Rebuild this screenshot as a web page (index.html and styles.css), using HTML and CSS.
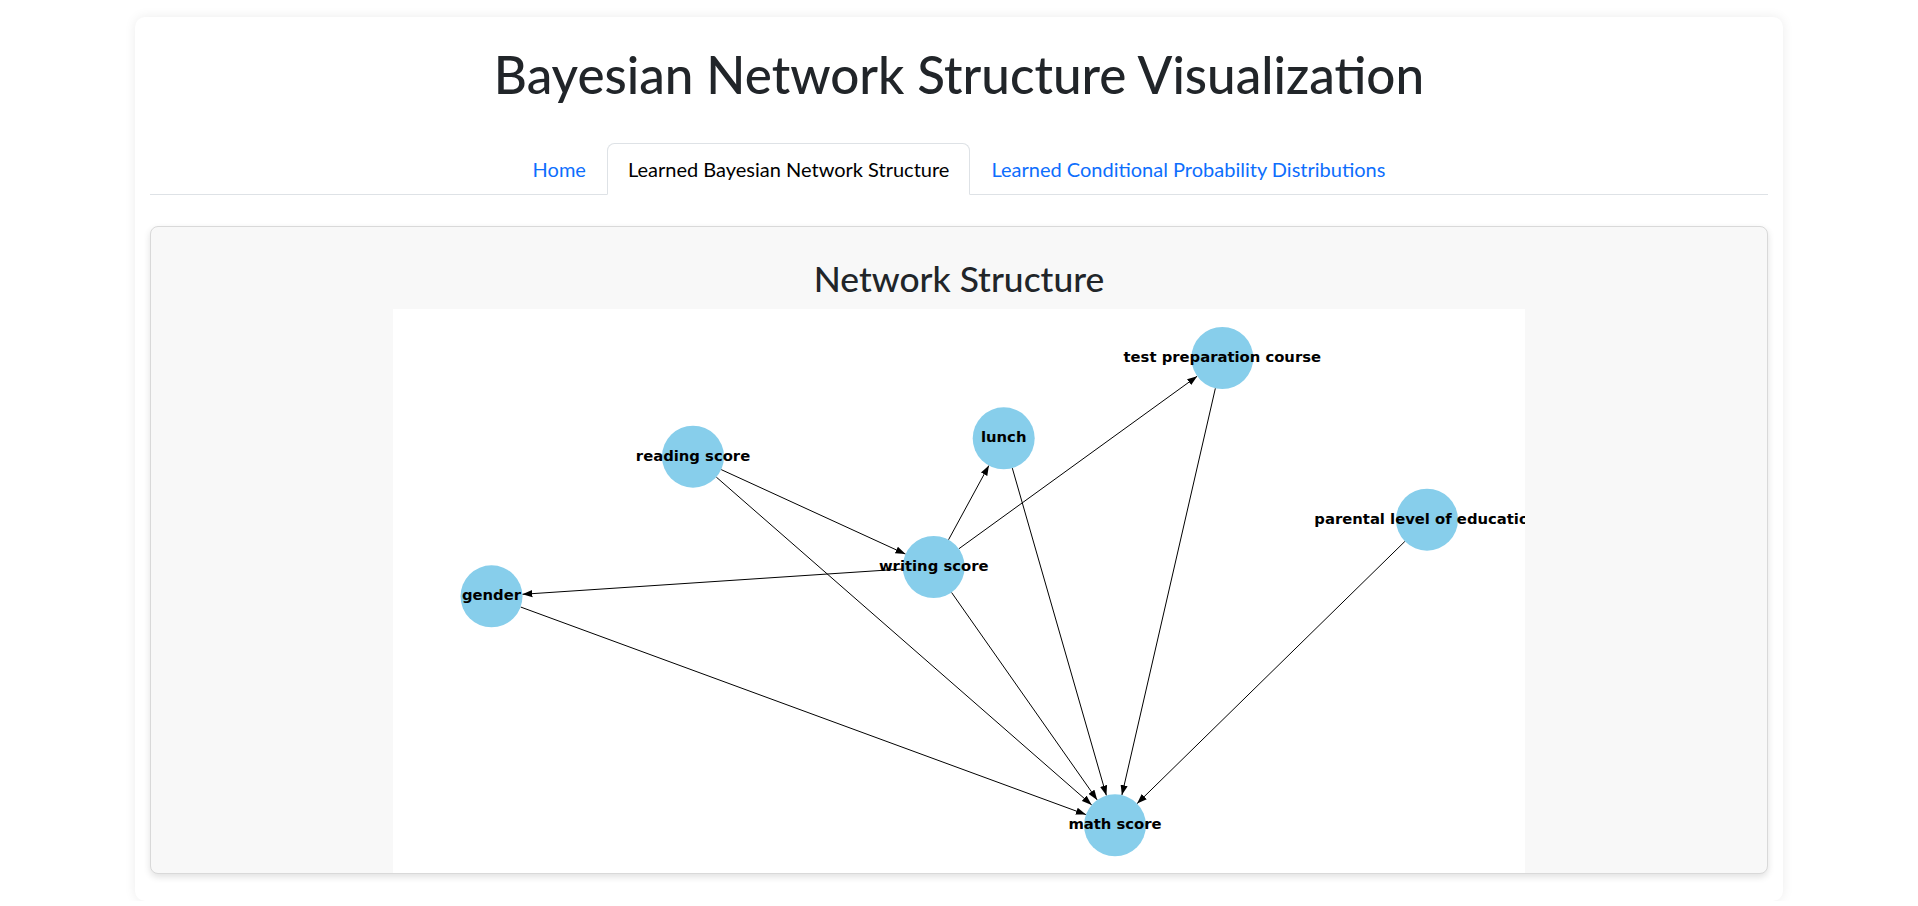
FILE: index.html
```html
<!DOCTYPE html>
<html lang="en">
<head>
<meta charset="utf-8">
<title>Bayesian Network Structure Visualization</title>
<link rel="stylesheet" href="styles.css">
</head>
<body>
<div class="page">
  <h1 class="title">Bayesian Network Structure Visualization</h1>
  <ul class="tabs">
    <li class="tab"><a class="tab-link" href="#">Home</a></li>
    <li class="tab"><a class="tab-link active" href="#">Learned Bayesian Network Structure</a></li>
    <li class="tab"><a class="tab-link" href="#">Learned Conditional Probability Distributions</a></li>
  </ul>
  <section class="panel">
    <h2 class="panel-title">Network Structure</h2>
    <svg class="graph" width="1132" height="600" viewBox="0 0 1132 600" xmlns="http://www.w3.org/2000/svg">
      <defs>
        <marker id="ah" markerUnits="userSpaceOnUse" markerWidth="10" markerHeight="8" refX="10" refY="4" orient="auto">
          <path d="M0,0.4 L10,4 L0,7.6 Z" fill="#000"/>
        </marker>
      </defs>
      <g class="edges">
        <line x1="328.2" y1="160.6" x2="512.5" y2="245.1"/>
        <line x1="323.3" y1="168.1" x2="698.7" y2="495.9"/>
        <line x1="555.5" y1="230.8" x2="595.9" y2="156.5"/>
        <line x1="565.8" y1="239.8" x2="804.2" y2="67.2"/>
        <line x1="509.8" y1="260.0" x2="129.4" y2="285.3"/>
        <line x1="558.5" y1="283.4" x2="704.2" y2="490.9"/>
        <line x1="127.6" y1="298.0" x2="692.9" y2="505.6"/>
        <line x1="619.3" y1="159.1" x2="713.4" y2="486.5"/>
        <line x1="822.4" y1="79.2" x2="728.9" y2="486.1"/>
        <line x1="1011.9" y1="232.4" x2="744.1" y2="494.6"/>
      </g>
      <g class="nodes">
        <circle cx="829.3" cy="49" r="31"/>
        <circle cx="610.7" cy="129.3" r="31"/>
        <circle cx="300" cy="147.7" r="31"/>
        <circle cx="1034" cy="210.7" r="31"/>
        <circle cx="540.7" cy="258" r="31"/>
        <circle cx="98.5" cy="287.3" r="31"/>
        <circle cx="722" cy="516.3" r="31"/>
      </g>
      <g class="labels">
        <text x="829.3" y="53">test preparation course</text>
        <text x="610.7" y="133.3">lunch</text>
        <text x="300" y="151.7">reading score</text>
        <text x="1034" y="214.7">parental level of education</text>
        <text x="540.7" y="262">writing score</text>
        <text x="98.5" y="291.3">gender</text>
        <text x="722" y="520.3">math score</text>
      </g>
    </svg>
  </section>
</div>
</body>
</html>
```
FILE: styles.css
```css
* {
  box-sizing: border-box;
}

html,
body {
  margin: 0;
  background: #fff;
}

body {
  font-family: Lato, "Open Sans", sans-serif;
  color: #212529;
}

.page {
  width: 1648px;
  margin: 17px auto 0;
  padding: 20px 15px 27px;
  background: #fff;
  border-radius: 10px;
  box-shadow: 0 0 12px rgba(0, 0, 0, 0.08);
}

.title {
  margin: 7px 0 39px;
  font-size: 51.2px;
  line-height: 60px;
  font-weight: 500;
  text-align: center;
}

.tabs {
  display: flex;
  justify-content: center;
  list-style: none;
  margin: 0;
  padding: 0;
  border-bottom: 1px solid #dee2e6;
}

.tab {
  margin-bottom: -1px;
}

.tab-link {
  display: block;
  padding: 10px 20px;
  font-size: 20px;
  line-height: 30px;
  color: #0d6efd;
  text-decoration: none;
  border: 1px solid transparent;
  border-radius: 7.5px 7.5px 0 0;
}

.tab-link.active {
  color: #000;
  background: #fff;
  border-color: #dee2e6 #dee2e6 #fff;
}

.panel {
  margin-top: 31px;
  height: 648px;
  overflow: hidden;
  padding: 31px 0 0;
  background: #f8f8f8;
  border: 1px solid #d9d9d9;
  border-radius: 8px;
  box-shadow: 0 3px 7px rgba(0, 0, 0, 0.12);
}

.panel-title {
  margin: 0 0 9px;
  font-size: 35.4px;
  line-height: 42px;
  font-weight: 500;
  text-align: center;
}

.graph {
  display: block;
  margin: 0 auto;
  background: #fff;
}

.edges line {
  stroke: #000;
  stroke-width: 1;
  marker-end: url(#ah);
}

.nodes circle {
  fill: #87ceeb;
}

.labels text {
  font-family: "DejaVu Sans", sans-serif;
  font-weight: bold;
  font-size: 14.8px;
  fill: #000;
  text-anchor: middle;
}
```
